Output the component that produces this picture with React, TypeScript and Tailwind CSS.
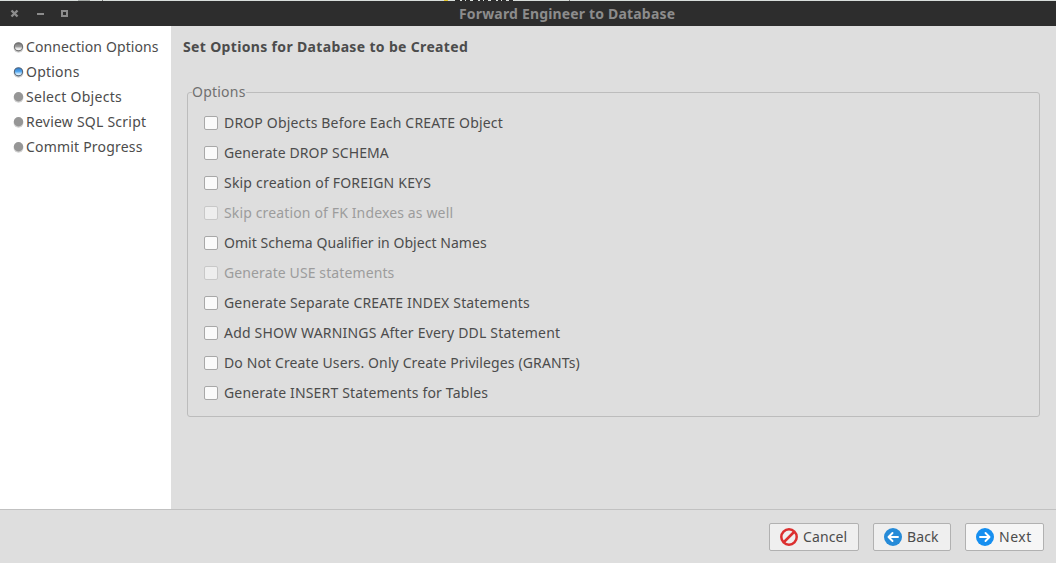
import React from "react";
import clsx from "clsx";

const steps = [
  { label: "Connection Options", state: "done", tracking: "tracking-[0.11px]" },
  { label: "Options", state: "current", tracking: "tracking-[0.22px]" },
  { label: "Select Objects", state: "todo", tracking: "tracking-[0.28px]" },
  { label: "Review SQL Script", state: "todo", tracking: "tracking-[0.23px]" },
  { label: "Commit Progress", state: "todo", tracking: "tracking-[0.2px]" },
];

const options = [
  { label: "DROP Objects Before Each CREATE Object", tracking: "tracking-[0.17px]" },
  { label: "Generate DROP SCHEMA", tracking: "tracking-[0.1px]" },
  { label: "Skip creation of FOREIGN KEYS", tracking: "tracking-[0.2px]" },
  { label: "Skip creation of FK Indexes as well", disabled: true, tracking: "tracking-[0.14px]" },
  { label: "Omit Schema Qualifier in Object Names", tracking: "tracking-[0.05px]" },
  { label: "Generate USE statements", disabled: true, tracking: "tracking-[0.11px]" },
  { label: "Generate Separate CREATE INDEX Statements", tracking: "tracking-[0.16px]" },
  { label: "Add SHOW WARNINGS After Every DDL Statement", tracking: "tracking-[0.19px]" },
  { label: "Do Not Create Users. Only Create Privileges (GRANTs)", tracking: "tracking-[0.12px]" },
  { label: "Generate INSERT Statements for Tables", tracking: "tracking-[0.16px]" },
];

function StepDot({ state }: { state: string }) {
  return (
    <svg width="12" height="12" viewBox="0 0 12 12" className="shrink-0">
      <defs>
        <linearGradient id={"dot-" + state} x1="0" y1="0" x2="0" y2="1">
          <stop offset="0" stopColor={state === "current" ? "#2878cc" : "#707070"} />
          <stop offset="0.5" stopColor={state === "current" ? "#58aaf0" : "#a0a0a0"} />
          <stop offset="0.65" stopColor={state === "current" ? "#a8d6fa" : "#e0e0e0"} />
          <stop offset="1" stopColor="#fff" />
        </linearGradient>
      </defs>
      <circle cx="6.5" cy="6.8" r="4.9" fill="#d0d0d0" />
      {state === "todo" ? (
        <circle cx="6.5" cy="5.8" r="4.7" fill="#969696" />
      ) : (
        <circle cx="6.5" cy="5.8" r="4.1" fill={`url(#dot-${state})`} stroke={state === "current" ? "#56677a" : "#707070"} strokeWidth="1.1" />
      )}
    </svg>
  );
}

function Arrow({ flip, color }: { flip?: boolean; color: string }) {
  return (
    <svg width="18" height="18" viewBox="0 0 18 18">
      <circle cx="9" cy="9" r="9" fill={color} />
      <path
        d={flip ? "M14 9H5M8.5 5L4.5 9L8.5 13" : "M4 9H13M9.5 5L13.5 9L9.5 13"}
        fill="none" stroke="#fff" strokeWidth="1.9" strokeLinecap="round" strokeLinejoin="round"
      />
    </svg>
  );
}

function Button({ icon, label, className }: { icon: React.ReactNode; label: string; className: string }) {
  return (
    <button className={clsx("flex h-7 items-center gap-[5px] rounded-[2px] border border-[#b1b1b1] pl-2.5", className)}>
      {icon}
      <span>{label}</span>
    </button>
  );
}

export default function App() {
  return (
    <div className="flex h-[563px] w-[1056px] flex-col overflow-hidden bg-[#dedede] font-['Noto_Sans',sans-serif] text-[14px] leading-5 whitespace-nowrap text-[#4c4c4c]">
      <svg width="1056" height="1" className="block shrink-0">
        <rect width="1056" height="1" fill="#d8dedb" />
        <path d="M78 .5H90" stroke="#a5aaa7" />
        <path d="M102 .5H103M569 .5H570" stroke="#777" />
        <path d="M444 .5H448" stroke="#e2c52c" />
        <path d="M455 .5H513" stroke="#292929" strokeDasharray="5 2 3 1 4 3" />
      </svg>
      <header className="grid h-[25px] shrink-0 grid-cols-[459px_1fr] items-center bg-[#2d2d2d] text-[#8c8c8c]">
        <svg width="80" height="25" viewBox="0 1 80 25" fill="none" stroke="#8c8c8c" strokeWidth="2">
          <path d="M11.5 10.5L17.5 16.5M17.5 10.5L11.5 16.5" strokeWidth="2.4" />
          <path d="M37 14H44M62 11H67V16H62Z" />
        </svg>
        <h1 className="font-bold tracking-[0.17px]">Forward Engineer to Database</h1>
      </header>
      <div className="flex h-[483px] shrink-0">
        <nav className="w-[171px] bg-white pt-2 pl-3">
          {steps.map((s) => (
            <div key={s.label} className="flex h-[25px] items-center gap-0.5">
              <StepDot state={s.state} />
              <span className={s.tracking}>{s.label}</span>
            </div>
          ))}
        </nav>
        <main className="flex-1 pt-[11px] pl-3">
          <h2 className="font-bold tracking-[0.34px]">Set Options for Database to be Created</h2>
          <fieldset className="mt-[25px] ml-1 h-[335px] w-[853px] rounded-[3px] border border-[#bcbcbc] px-4 pt-[6px]">
            <legend className="-ml-3 h-5 tracking-[0.22px] text-[#707070]">Options</legend>
            {options.map((o) => (
              <label key={o.label} className={clsx("flex h-[30px] items-center gap-1.5", o.disabled && "text-[#9c9c9c]")}>
                <span className={clsx("size-3.5 shrink-0 rounded-[2px] border", o.disabled ? "border-[#c8c8c8] bg-[#eeeeee]" : "border-[#a8a8a8] bg-[#fafafa]")} />
                <span className={o.tracking}>{o.label}</span>
              </label>
            ))}
          </fieldset>
        </main>
      </div>
      <footer className="flex flex-1 items-start justify-end gap-3.5 border-t border-[#c1c1c1] pt-[13px] pr-3">
        <Button className="w-[90px] bg-[#efefef] tracking-[0.1px]" label="Cancel" icon={
          <svg width="18" height="18" viewBox="0 0 18 18" fill="none" stroke="#dc3030" strokeWidth="2.5">
            <circle cx="9" cy="9" r="7.7" /><path d="M14 4L4 14" />
          </svg>} />
        <Button className="w-[78px] bg-[#efefef] tracking-[0.15px]" label="Back" icon={<Arrow flip color="#268bd8" />} />
        <Button className="w-[79px] bg-[#f6f6f6] tracking-[0.5px]" label="Next" icon={<Arrow color="#168ff0" />} />
      </footer>
    </div>
  );
}
